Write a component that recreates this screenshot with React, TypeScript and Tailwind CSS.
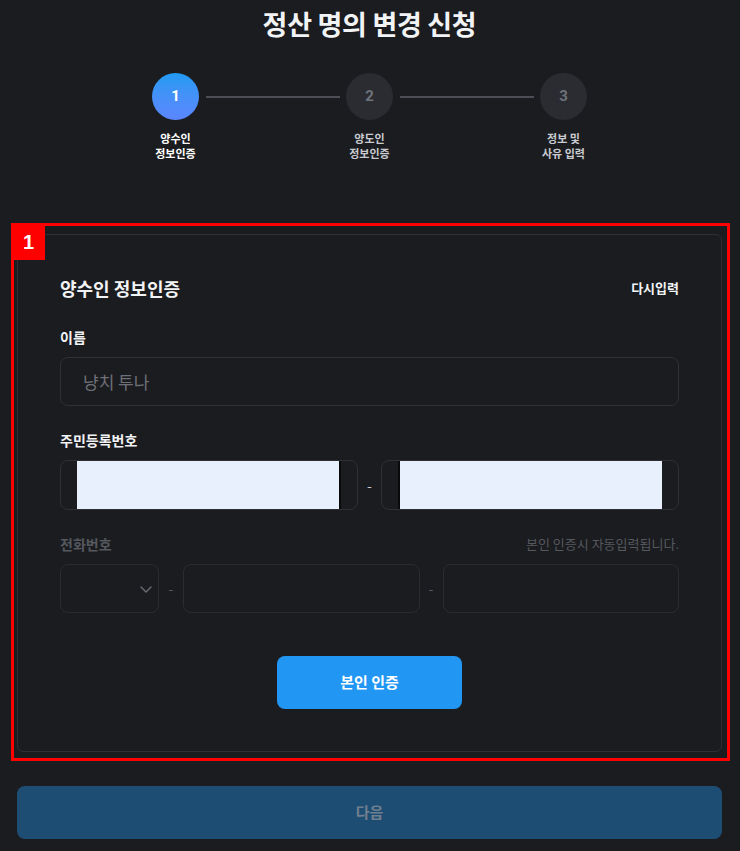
import React from "react";

const font = { fontFamily: '"Noto Sans CJK KR", "Noto Sans", sans-serif' };

function Step({ n, label, active }: { n: string; label: string[]; active?: boolean }) {
  return (
    <div className="flex w-[60px] flex-col items-center">
      <div
        className={
          active
            ? "flex h-[47px] w-[47px] items-center justify-center rounded-full bg-gradient-to-b from-[#1f9af2] to-[#5b86ff] text-[15px] font-bold text-white"
            : "flex h-[47px] w-[47px] items-center justify-center rounded-full bg-[#2a2c31] text-[15px] font-bold text-[#6e727a]"
        }
        style={{ fontFamily: 'Roboto, "Noto Sans", sans-serif' }}
      >
        {n}
      </div>
      <div
        className={
          "mt-[11px] flex flex-col items-center gap-[1px] whitespace-nowrap text-center text-[11px] font-bold leading-[14px] " +
          (active ? "text-white" : "text-[#c9cbd0]")
        }
      >
        {label.map((l) => (
          <div key={l}>{l}</div>
        ))}
      </div>
    </div>
  );
}

function Dash({ w, muted }: { w: string; muted?: boolean }) {
  return (
    <div className={w + " flex items-center justify-center text-[14px] " + (muted ? "text-[#55585e]" : "text-[#c9cbd0]")}>-</div>
  );
}

export default function App() {
  return (
    <div className="min-h-[851px] w-full bg-[#1b1c20] pl-[17px] pr-[18px]" style={font}>
      <h1 className="pt-[5px] text-center text-[27px] font-bold leading-[38px] tracking-[-0.3px] text-[#f2f3f5]">
        정산 명의 변경 신청
      </h1>

      <div className="mt-[30px] flex justify-center">
        <Step n="1" label={["양수인", "정보인증"]} active />
        <div className="mt-[23px] h-[2px] w-[134px] bg-[#4b4e54]" />
        <Step n="2" label={["양도인", "정보인증"]} />
        <div className="mt-[23px] h-[2px] w-[134px] bg-[#4b4e54]" />
        <Step n="3" label={["정보 및", "사유 입력"]} />
      </div>

      <div className="relative mt-[74px]">
        <div className="pointer-events-none absolute -bottom-[9px] -left-[6px] -right-[8px] -top-[11px] border-[3px] border-[#ff0000]" />
        <div className="pointer-events-none absolute -left-[5px] -top-[10px] flex h-[36px] w-[33px] items-center justify-center bg-[#ff0000] text-[20px] font-bold text-white" style={{ fontFamily: '"Liberation Sans", Arial, sans-serif' }}>
          1
        </div>

        <div className="rounded-[6px] border border-[#2e3035] bg-[#1b1c20] px-[42px] pb-[42px] pt-[40px]">
          <div className="flex items-center justify-between">
            <div className="text-[18px] font-bold leading-[26px] text-[#f2f3f5]">양수인 정보인증</div>
            <div className="text-[13px] font-bold leading-[20px] text-[#f2f3f5]">다시입력</div>
          </div>

          <div className="mt-[26px] text-[14px] font-bold leading-[20px] text-[#f2f3f5]">이름</div>
          <div className="mt-[10px] flex h-[49px] items-center rounded-[8px] border border-[#2e3035] px-[22px] text-[17px] text-[#6d7077]">
            냥치 투나
          </div>

          <div className="mt-[24px] text-[14px] font-bold leading-[20px] text-[#f2f3f5]">주민등록번호</div>
          <div className="mt-[10px] flex h-[50px]">
            <div className="flex flex-1 rounded-[8px] border border-[#2e3035] px-[16px]">
              <div className="flex-1 border-r-2 border-[#0a0a0a] bg-[#e8f0fe]" />
            </div>
            <Dash w="w-[23px]" />
            <div className="flex flex-1 rounded-[8px] border border-[#2e3035] px-[16px]">
              <div className="flex-1 border-l-2 border-[#0a0a0a] bg-[#e8f0fe]" />
            </div>
          </div>

          <div className="mt-[24px] flex items-center justify-between">
            <div className="text-[14px] font-bold leading-[20px] text-[#55585e]">전화번호</div>
            <div className="text-[13px] leading-[20px] text-[#55585e]">본인 인증시 자동입력됩니다.</div>
          </div>
          <div className="mt-[10px] flex h-[49px]">
            <div className="flex w-[99px] items-center justify-end rounded-[8px] border border-[#2a2c31] pr-[4px]">
              <svg width="16" height="16" viewBox="0 0 16 16" fill="none">
                <path d="M3 6l5 5 5-5" stroke="#6a6d74" strokeWidth="1.4" strokeLinecap="round" strokeLinejoin="round" />
              </svg>
            </div>
            <Dash w="w-[24px]" muted />
            <div className="flex-1 rounded-[8px] border border-[#2a2c31]" />
            <Dash w="w-[23px]" muted />
            <div className="flex-1 rounded-[8px] border border-[#2a2c31]" />
          </div>

          <div className="mt-[43px] flex justify-center">
            <button className="h-[53px] w-[185px] rounded-[8px] bg-[#2196f3] text-[15px] font-bold text-white">
              본인 인증
            </button>
          </div>
        </div>
      </div>

      <button className="mt-[34px] h-[53px] w-full rounded-[8px] bg-[#1e4d74] text-[15px] font-bold text-[#6f7f8d]">
        다음
      </button>
    </div>
  );
}
